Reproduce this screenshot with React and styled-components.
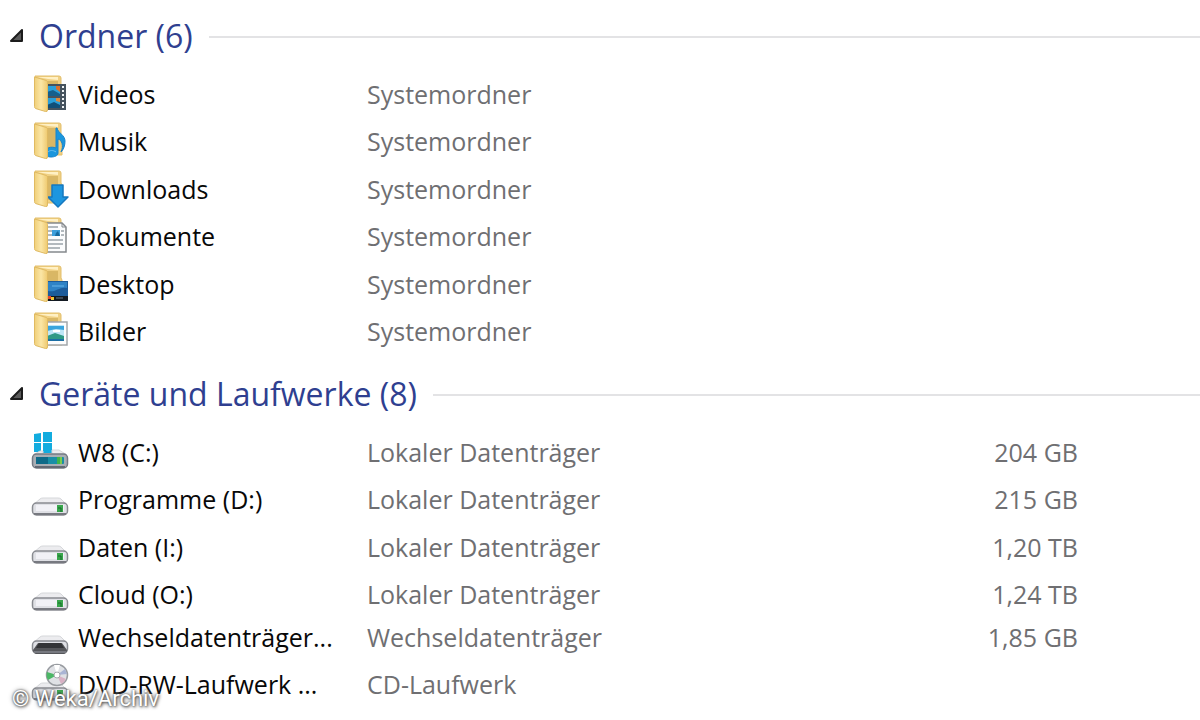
import React,{useState} from 'react'
import styled,{createGlobalStyle} from 'styled-components'

const folders = [
  {name: 'Videos', type: 'Systemordner', icon: 'video'},
  {name: 'Musik', type: 'Systemordner', icon: 'music'},
  {name: 'Downloads', type: 'Systemordner', icon: 'download'},
  {name: 'Dokumente', type: 'Systemordner', icon: 'document'},
  {name: 'Desktop', type: 'Systemordner', icon: 'desktop'},
  {name: 'Bilder', type: 'Systemordner', icon: 'picture'},
]

const drives = [
  {name: 'W8 (C:)', type: 'Lokaler Datenträger', size: '204 GB', icon: 'system'},
  {name: 'Programme (D:)', type: 'Lokaler Datenträger', size: '215 GB', icon: 'drive'},
  {name: 'Daten (I:)', type: 'Lokaler Datenträger', size: '1,20 TB', icon: 'drive'},
  {name: 'Cloud (O:)', type: 'Lokaler Datenträger', size: '1,24 TB', icon: 'drive', tight: true},
  {name: 'Wechseldatenträger...', type: 'Wechseldatenträger', size: '1,85 GB', icon: 'removable'},
  {name: 'DVD-RW-Laufwerk ...', type: 'CD-Laufwerk', size: '', icon: 'dvd'},
]

// what sits in front of the open folder
const overlays = {
  video: (
    <g>
      <rect x="17" y="11" width="19" height="26" fill="#46535e"/>
      <rect x="17" y="13" width="13" height="10" fill="#2b9fd8"/>
      <path d="M17 19l6-2 7 4v2H17z" fill="#155f8c"/>
      <path d="M26 13h4v6l-4-3z" fill="#d9702e"/>
      <rect x="17" y="25" width="13" height="10" fill="#2b9fd8"/>
      <path d="M17 32l7-3 6 3v3H17z" fill="#114f78"/>
      <path d="M26 25h4v4l-4-1z" fill="#e08a3c"/>
      <path d="M33 13v23" stroke="#f0f3f5" strokeWidth="2" strokeDasharray="2 2"/>
    </g>
  ),
  music: (
    <g fill="#1b96dc" stroke="#1683cc" strokeWidth="1">
      <path d="M26 8h1c1 5 8 7 8 13 0 4-1 8-4 11 3-6 1-12-3-13v14c0 3-4 4-7 4-4 0-6-2-6-5 0-4 6-6 11-4z"/>
      <path d="M18 32c2-2 5-2 8 0" fill="none" stroke="#6cc0f0"/>
    </g>
  ),
  download: (
    <path d="M22 17h11v12h5L28 39 18 29h4z" fill="#1d96df" stroke="#1678bf" strokeWidth="1.500" strokeLinejoin="round"/>
  ),
  document: (
    <g>
      <path d="M16 8h16l4 4v25H16z" fill="#fbfcfd" stroke="#85898d" strokeWidth="1.500"/>
      <path d="M32 8v4h4" fill="none" stroke="#85898d"/>
      <path d="M18 12h10M18 16h4M31 16h3M18 20h4M31 20h3M18 25h15M18 29h15M18 33h12" stroke="#9aa2a9" strokeWidth="1.500"/>
      <rect x="22" y="15" width="8" height="6" fill="#3c9edb"/>
      <path d="M26 18l2-2 2 5h-5z" fill="#15699e"/>
    </g>
  ),
  desktop: (
    <g>
      <rect x="17" y="18" width="21" height="20" fill="#1d5c9b"/>
      <path d="M18 19h19v6c-7-2-12 5-19 3z" fill="#2f83c6"/>
      <path d="M22 23h12" stroke="#69b6ea"/>
      <rect x="17" y="33" width="21" height="5" fill="#131a22"/>
      <rect x="18" y="33" width="3" height="3" fill="#e5482f"/>
      <rect x="21" y="34" width="3" height="3" fill="#f4c534"/>
      <path d="M26 35h7" stroke="#6e7a86"/>
    </g>
  ),
  picture: (
    <g>
      <rect x="17" y="12" width="20" height="23" fill="#fdfdfd" stroke="#a3a7aa" strokeWidth="1.500"/>
      <rect x="17" y="15" width="17" height="16" fill="#bfe6f6"/>
      <path d="M17 16h17v4l-8-1-9 2z" fill="#3aa5de"/>
      <path d="M17 26l8-3 9 3v5H17z" fill="#2f9a85"/>
      <path d="M17 29h17v2H17z" fill="#1c6fa5"/>
      <path d="M23 21h7" stroke="#fff" strokeWidth="2"/>
    </g>
  ),
}

function FolderIcon({kind}) {
  return (
    <Icon viewBox="0 0 40 40" aria-hidden="true">
      <defs>
        <linearGradient id={`flap-${kind}`} x1="0" x2="1">
          <stop offset="0" stopColor="#f0cf78"/>
          <stop offset="0.500" stopColor="#fbe6a6"/>
          <stop offset="1" stopColor="#efca70"/>
        </linearGradient>
      </defs>
      <path d="M5 3h24q2 0 2 2v10l1 2v18H12z" fill="#f0d083" stroke="#e3bf6c"/>
      <path d="M7 4h21v3l-10-1z" fill="#fff0c4"/>
      <path d="M17 8h11v24H17z" fill="#d9b765"/>
      {overlays[kind]}
      <path d="M4.500 4l12 3.500q1 .5 1 2V37q0 2-2 1.500l-10-3q-1-.5-1-2z" fill={`url(#flap-${kind})`} stroke="#e0ba62"/>
    </Icon>
  )
}

function DriveIcon({kind}) {
  const dark = kind === 'system'
  return (
    <Icon viewBox="0 0 40 40" aria-hidden="true">
      {dark && (
        <g fill="#12acdf">
          <path d="M4 3l7-1v9H4zM13 1h9v10h-9zM4 12h7v9H4zM13 12h9v10h-9z"/>
        </g>
      )}
      <path d={dark ? 'M3 24l7-4h3v3h9v-4h7l8 5z' : 'M3 27l7-6q1-1 3-1h15q2 0 3 1l6 6z'} fill="#ececef" stroke="#d5d7da"/>
      {dark ? (
        <g>
          <rect x="2.500" y="23" width="35" height="14" rx="4" fill="#a9aeb4" stroke="#747983" strokeWidth="1.500"/>
          <rect x="6" y="26" width="28" height="7" rx="1" fill="#1a8ea6"/>
          <path d="M6 26h12v7H6z" fill="#0f6a88"/>
          <rect x="27" y="26" width="5" height="7" fill="#3fb44a"/>
          <path d="M31 26v7" stroke="#b8df4f"/>
          <path d="M5 36h30" stroke="#646973" strokeWidth="2"/>
        </g>
      ) : (
        <g>
          <rect x="2.500" y="25" width="35" height="12" rx="4" fill="#dfe0e5" stroke="#898b91" strokeWidth="1.500"/>
          {kind === 'removable'
            ? <path d="M8 27h24l5 7q0 3-3 4H6q-3-1-3-4z" fill="#55565a"/>
            : <path d="M6 27h28v6H6z" fill="#f1f1f6"/>}
          {kind === 'removable' && <path d="M9 27h22l3 5H6z" fill="#333437"/>}
          <path d="M4 36h32" stroke="#777980" strokeWidth="2"/>
          {kind !== 'removable' && <rect x="27" y="27" width="6" height="7" fill="#39a64c"/>}
          {kind !== 'removable' && <path d="M28 30h3v4" fill="none" stroke="#166c2a"/>}
        </g>
      )}
      {kind === 'dvd' && (
        <g>
          <circle cx="27" cy="12" r="10.500" fill="#dfe1e5" stroke="#999ca1" strokeWidth="1.500"/>
          <path d="M27 12L17 9a10 10 0 0 0 1 8z" fill="#4cb766"/>
          <path d="M27 12l9 4a10 10 0 0 1-5 5z" fill="#d8b1c4"/>
          <path d="M27 12l-3-10h6z" fill="#fff"/>
          <path d="M27 12l8-6 2 5z" fill="#a9b4d4"/>
          <circle cx="27" cy="12" r="3" fill="#fff" stroke="#a6a8ad"/>
        </g>
      )}
    </Icon>
  )
}

function Group({title, count, items}) {
  const [open, setOpen] = useState(true)

  return (
    <section>
      <GroupHead>
        <Title>
          <Toggle type="button" aria-expanded={open} onClick={()=>{setOpen(!open)}}>
            <Arrow viewBox="0 0 16 16" aria-hidden="true">
              <path d="M14 2v11H3z" fill="#5a5a5a" stroke="#1c1c1c" strokeWidth="2" strokeLinejoin="round"/>
            </Arrow>
            {title} ({count})
          </Toggle>
        </Title>
        <Line/>
      </GroupHead>
      {open && (
        <List aria-label={title}>
          <tbody>
            {items.map((item)=>(
              <Row key={item.name} $tight={item.tight}>
                <NameCell>
                  <Name>
                    {overlays[item.icon] ? <FolderIcon kind={item.icon}/> : <DriveIcon kind={item.icon}/>}
                    {item.name}
                  </Name>
                </NameCell>
                <TypeCell>{item.type}</TypeCell>
                <SizeCell>{item.size}</SizeCell>
              </Row>
            ))}
          </tbody>
        </List>
      )}
    </section>
  )
}

function App() {
  return (
    <Explorer>
      <GlobalStyle/>
      <Group title="Ordner" count={6} items={folders}/>
      <Group title="Geräte und Laufwerke" count={8} items={drives}/>
      <Credit>© Weka/Archiv</Credit>
    </Explorer>
  )
}

const GlobalStyle = createGlobalStyle`
    *{
      box-sizing: border-box;
    }
    body{
      margin: 0;
      background: #fff;
    }
    `

const Explorer = styled.main`
    position: relative;
    height: 100vh;
    overflow: hidden;
    color: #080808;
    font-family: "Open Sans", "Noto Sans", sans-serif;
    font-size: 25px;
    `

const GroupHead = styled.div`
    display: flex;
    align-items: center;
    gap: 16px;
    height: 73px;
    padding-left: 8px;
    `

const Title = styled.h2`
    margin: 0;
    font-size: 32px;
    font-weight: 400;
    `

const Toggle = styled.button`
    display: flex;
    align-items: center;
    gap: 15px;
    padding: 0 0 2px;
    border: 0;
    background: none;
    color: #2f3f90;
    font: inherit;
    line-height: 40px;
    white-space: nowrap;
    `

const Arrow = styled.svg`
    width: 16px;
    height: 16px;
    `

const Line = styled.div`
    flex: 1;
    height: 2px;
    background: #e3e3e5;
    `

const List = styled.table`
    width: 100%;
    table-layout: fixed;
    border-collapse: collapse;
    `

const Row = styled.tr`
    height: ${props => props.$tight ? '43px' : '48px'};
    line-height: 43px;
    &:nth-child(odd){
      height: 47px;
    }
    `

const NameCell = styled.td`
    width: 367px;
    padding: 0 0 0 30px;
    vertical-align: top;
    `

const Name = styled.div`
    display: flex;
    align-items: flex-start;
    gap: 8px;
    height: 43px;
    font-weight: 500;
    white-space: nowrap;
    `

const Icon = styled.svg`
    flex: none;
    width: 40px;
    height: 40px;
    `

const TypeCell = styled.td`
    padding: 0;
    color: #6f6f72;
    vertical-align: top;
    `

const SizeCell = styled(TypeCell)`
    padding-right: 122px;
    text-align: right;
    `

const Credit = styled.small`
    position: absolute;
    left: 12px;
    bottom: 7px;
    color: #fff;
    font-family: Roboto, "Liberation Sans", sans-serif;
    font-size: 22px;
    line-height: 28px;
    text-shadow: 0 0 2px #555, 1px 1px 3px #555, 0 0 5px #888;
    `

export default App
